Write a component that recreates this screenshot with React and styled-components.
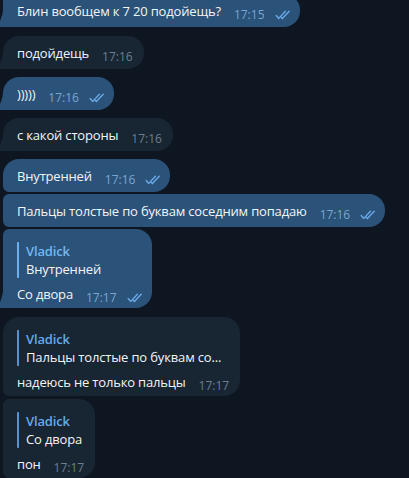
import React from 'react';
import styled, { createGlobalStyle } from 'styled-components';

const Global = createGlobalStyle`
  html, body { margin: 0; padding: 0; background: #0e1621; }
  body { font-family: "Open Sans", "Noto Sans", sans-serif; overflow: hidden; }
  #root { height: 478px; overflow: hidden; }
`;

const Chat = styled.div`
  display: flex;
  flex-direction: column;
  align-items: flex-start;
  padding-left: 3px;
  margin-top: -6px;
`;

const Bubble = styled.div`
  position: relative;
  box-sizing: border-box;
  margin-top: ${(p) => p.$gap}px;
  background: ${(p) => (p.$out ? '#2b5278' : '#182533')};
  border-radius: 16px;
  border-top-left-radius: ${(p) => p.$tl}px;
  border-bottom-left-radius: ${(p) => p.$bl}px;
  padding: 7px ${(p) => (p.$out ? 8 : 11)}px ${(p) => (p.$reply ? 4 : 6)}px 14px;
  color: #f3f5f7;
`;

const Tail = styled.svg`
  position: absolute;
  left: -9px;
  bottom: 0;
  width: 9px;
  height: 20px;
  fill: ${(p) => (p.$out ? '#2b5278' : '#182533')};
`;

const Reply = styled.div`
  box-sizing: border-box;
  width: 0;
  min-width: 100%;
  margin: 6px 0 6px 0;
  padding-left: 7px;
  border-left: 2px solid ${(p) => (p.$out ? '#6ab0ee' : '#4f96d8')};
  border-radius: 1px;
  font-size: 13px;
  line-height: 18px;
  letter-spacing: -0.15px;
`;

const ReplyName = styled.div`
  font-weight: 600;
  color: ${(p) => (p.$out ? '#74b7f3' : '#64aaec')};
  white-space: nowrap;
`;

const ReplyText = styled.div`
  white-space: nowrap;
  overflow: hidden;
  color: #f3f5f7;
`;

const Line = styled.div`
  display: flex;
  align-items: flex-end;
  white-space: nowrap;
`;

const Text = styled.span`
  font-size: 13px;
  line-height: 20px;
  letter-spacing: -0.17px;
`;

const Meta = styled.span`
  display: inline-flex;
  align-items: center;
  gap: 10px;
  margin-left: 13px;
  margin-bottom: -2px;
  font-size: 12px;
  line-height: 16px;
  color: ${(p) => (p.$out ? '#7aa6d2' : '#6d7f90')};
`;

const Checks = styled.svg`
  width: 17px;
  height: 10px;
  fill: none;
  stroke: #6aaae8;
  stroke-width: 1.4;
  stroke-linecap: round;
  stroke-linejoin: round;
`;

const DoubleCheck = () => (
  <Checks viewBox="0 0 17 10">
    <path d="M1.2 5.6 L3.8 8.4 L10.4 1.2" />
    <path d="M7.4 8.4 L14.2 1.2" />
    <path d="M6.2 7.2 L7.4 8.4" />
  </Checks>
);

const messages = [
  { out: true, text: 'Блин вообщем к 7 20 подойещь?', time: '17:15', gap: 0, tl: 6, bl: 0, tail: true },
  { out: false, text: 'подойдещь', time: '17:16', gap: 9, tl: 16, bl: 0, tail: true },
  { out: true, text: ')))))', time: '17:16', gap: 8, tl: 16, bl: 0, tail: true },
  { out: false, text: 'с какой стороны', time: '17:16', gap: 8, tl: 16, bl: 0, tail: true },
  { out: true, text: 'Внутренней', time: '17:16', gap: 8, tl: 16, bl: 6 },
  { out: true, text: 'Пальцы толстые по буквам соседним попадаю', time: '17:16', gap: 2, tl: 6, bl: 6 },
  { out: true, reply: { name: 'Vladick', text: 'Внутренней' }, text: 'Со двора', time: '17:17', gap: 2, tl: 6, bl: 0, tail: true },
  { out: false, reply: { name: 'Vladick', text: 'Пальцы толстые по буквам со...' }, text: 'надеюсь не только пальцы', time: '17:17', gap: 9, tl: 16, bl: 6 },
  { out: false, reply: { name: 'Vladick', text: 'Со двора' }, text: 'пон', time: '17:17', gap: 3, tl: 6, bl: 6 },
];

export default function App() {
  return (
    <>
      <Global />
      <Chat>
        {messages.map((m, i) => (
          <Bubble key={i} $out={m.out} $gap={m.gap} $tl={m.tl} $bl={m.bl} $reply={!!m.reply}>
            {m.tail && (
              <Tail $out={m.out} viewBox="0 0 9 20">
                <path d="M3 17h6V0c-.193 2.84-.876 5.767-2.05 8.782-.904 2.325-2.446 4.485-4.625 6.48A1 1 0 003 17z" transform="translate(0 3)" />
              </Tail>
            )}
            {m.reply && (
              <Reply $out={m.out}>
                <ReplyName $out={m.out}>{m.reply.name}</ReplyName>
                <ReplyText>{m.reply.text}</ReplyText>
              </Reply>
            )}
            <Line>
              <Text>{m.text}</Text>
              <Meta $out={m.out}>
                {m.time}
                {m.out && <DoubleCheck />}
              </Meta>
            </Line>
          </Bubble>
        ))}
      </Chat>
    </>
  );
}
